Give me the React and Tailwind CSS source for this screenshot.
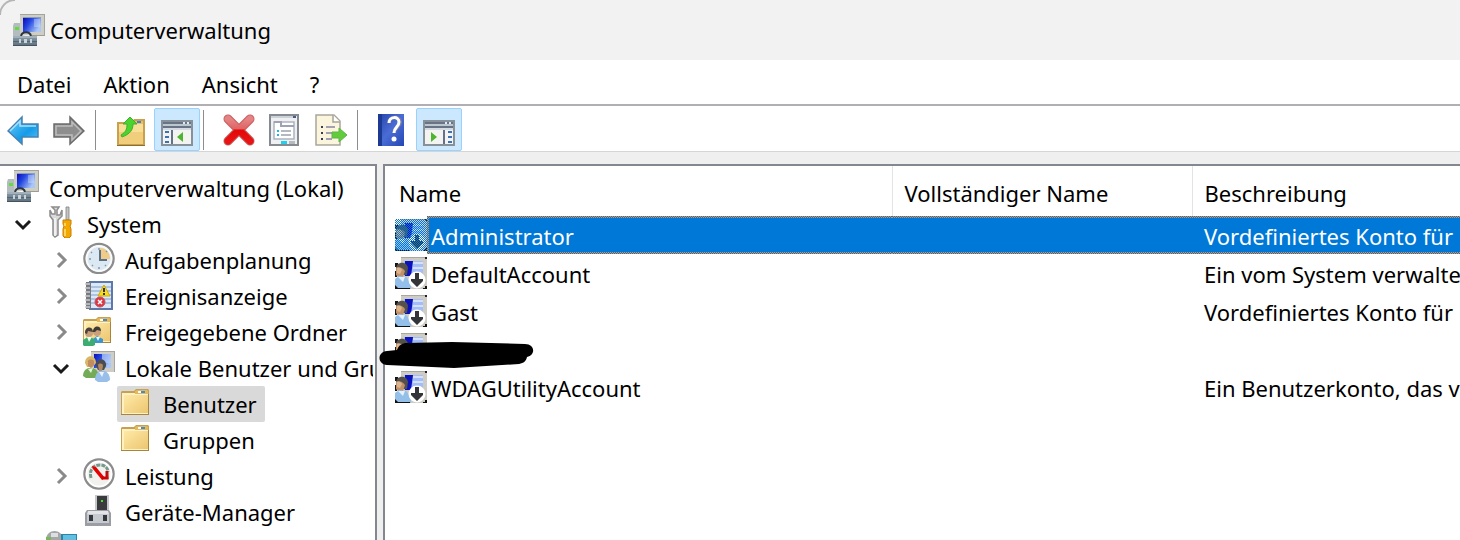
import { useState } from 'react';

const Icon = ({ children }) => (
  <svg className="block size-8 shrink-0" viewBox="0 0 32 32" aria-hidden="true">
    {children}
  </svg>
);

const ComputerIcon = () => (
  <Icon>
    <defs>
      <linearGradient id="screen" x1="0" y1="0" x2="1" y2="0.5">
        <stop offset="0" stopColor="#0c0cb4" />
        <stop offset="0.4" stopColor="#2344e0" />
        <stop offset="1" stopColor="#a9c8f8" />
      </linearGradient>
      <linearGradient id="toolbox" x1="0" y1="0" x2="0" y2="1">
        <stop offset="0" stopColor="#8c9daa" />
        <stop offset="1" stopColor="#5d6f7c" />
      </linearGradient>
    </defs>
    <path d="M1 9h7v13H0V12z" fill="#b3bcbf" />
    <path d="M2 13h4v3H2z" fill="#62dc3c" />
    <path d="M7 0h25v22H18l-3-1-8 1z" fill="#cfcec4" />
    <path d="M7 0h25v1H7zM31 0h1v22h-1z" fill="#a3a59c" />
    <path d="M19 21h12v1H19z" fill="#9b9d94" />
    <path d="M10 4h18v14H10z" fill="url(#screen)" />
    <path d="M10 3h18v1H10z" fill="#8b9bbb" />
    <path d="M21 5h6v8h-6z" fill="#d5e4fc" fillOpacity="0.4" />
    <path d="M8 22c1-5 9-5 10 0" fill="none" stroke="#2c3640" strokeWidth="2" />
    <path d="M0 22h24v10H0z" fill="url(#toolbox)" />
    <path d="M0 22h24v2H0z" fill="#a1b0ba" />
    <path d="M0 27h24v1H0z" fill="#526572" />
    <path d="M6 25h2v4H6zM11 25h3v4h-3zM17 25h2v4h-2z" fill="#c9d3da" />
    <path d="M0 31h24v1H0z" fill="#45535e" />
  </Icon>
);

const ToolsIcon = () => (
  <Icon>
    <path d="M7 1l3 3v4H7L5 4v6l3 4v15l2 2 3-2V14l4-4V4l-2 5-3 0V4l2-3z" fill="#dadada" stroke="#8c8c8c" strokeWidth="1.5" />
    <path d="M10 12v18" stroke="#f9f9f9" strokeWidth="1.5" />
    <path d="M21 1h3v13h-3z" fill="#c4c4c4" stroke="#808080" strokeWidth="0.8" />
    <path d="M18 14h8v4l-1 2 1 3v7l-2 2h-4l-2-2v-7l1-3-1-2z" fill="#f2a800" stroke="#ca7c00" />
    <path d="M20 17v3M20 23v7" stroke="#ffe17c" strokeWidth="1.5" />
  </Icon>
);

const ClockIcon = () => (
  <Icon>
    <circle cx="16" cy="16.500" r="14.500" fill="#dce9f2" stroke="#8c8c8c" strokeWidth="2.500" />
    <circle cx="16" cy="16.500" r="12.500" fill="none" stroke="#fafafa" strokeWidth="2" />
    <path d="M17 6c6 0 10 5 10 11H17z" fill="#f0cc88" />
    <path d="M17 8v10h7" fill="none" stroke="#5c7186" strokeWidth="2" />
    <path d="M16 6v2M6 17h2M16 25v2M8 10l1 1M9 24l1-1M23 24l-1-1M24 9l-1 1" stroke="#8197aa" strokeWidth="1.500" />
  </Icon>
);

const EventIcon = () => (
  <Icon>
    <path d="M6 3h24v29H6z" fill="#5f78ac" />
    <path d="M8 5h20v25H8z" fill="#dbe9f6" />
    <path d="M8 9h20M8 13h20M8 17h20M8 21h20M8 25h20" stroke="#7f9fcd" />
    <path d="M3 4h5v27H3z" fill="#77797e" />
    <path d="M2 6h5M2 10h5M2 14h5M2 18h5M2 22h5M2 26h5M2 29h5" stroke="#c9cbd0" strokeWidth="1.500" />
    <path d="M21 7l6 11H15z" fill="#f8dc20" stroke="#ceaa08" />
    <path d="M21 10v4M21 15v2" stroke="#333" strokeWidth="2" />
    <circle cx="17" cy="24" r="5" fill="#d93945" stroke="#c4505c" />
    <path d="M15 22l4 4M19 22l-4 4" stroke="#fff" strokeWidth="1.500" />
  </Icon>
);

const FolderBase = () => (
  <>
    <defs>
      <linearGradient id="folder" x1="0" y1="0" x2="1" y2="1">
        <stop offset="0" stopColor="#ffe9a6" />
        <stop offset="1" stopColor="#ecc671" />
      </linearGradient>
    </defs>
    <path d="M0 6l1-1h12l2-2h12l1 1v25H0z" fill="#c9a050" />
    <path d="M1 7h26v21H1z" fill="#fff1c0" />
    <path d="M3 9h24v18H3z" fill="url(#folder)" />
    <path d="M14 8V5l2-1h10l1 1v3z" fill="#e3b95f" />
    <path d="M17 5h4v2h-4z" fill="#fff" />
    <path d="M20 5h4v2h-4z" fill="#3d8be0" />
    <path d="M0 28h28v1H0zM27 8h1v21h-1z" fill="#a8853c" />
  </>
);

const FolderIcon = () => (
  <Icon>
    <FolderBase />
  </Icon>
);

const SharedFolderIcon = () => (
  <Icon>
    <FolderBase />
    <circle cx="14" cy="18" r="4" fill="#caa07a" />
    <path d="M10 18c0-7 8-7 8-1l-4-1-2 2z" fill="#3d3a38" />
    <circle cx="6" cy="19" r="4" fill="#caa07a" />
    <path d="M2 19c0-7 8-7 8-1l-5-1-1 3z" fill="#4a423c" />
    <path d="M10 29v-4l4-3 6 3v4z" fill="#3a96cd" />
    <path d="M13 23l2 4 2-4z" fill="#e8f8ff" />
    <path d="M0 31v-5l5-3h3l4 3v5l-2 1H1z" fill="#3cac73" />
    <path d="M4 23l2 5 3-5z" fill="#e8fff0" />
  </Icon>
);

const GroupIcon = () => (
  <Icon>
    <path d="M8 1h24v21H8z" fill="#cfcec6" />
    <path d="M8 1h24v1H8zM31 1h1v21h-1z" fill="#a5a69f" />
    <path d="M11 4h17v14H11z" fill="url(#screen)" />
    <path d="M19 4h9v9h-9z" fill="#b7cffa" fillOpacity="0.7" />
    <path d="M2 13c0-9 11-9 11 0l-3 4H4z" fill="#d9b765" />
    <path d="M5 11c1-2 6-2 6 1v3l-3 3-3-2z" fill="#c18c62" />
    <path d="M0 26c0-11 15-11 16 0l-3 2H3z" fill="#74ab56" />
    <path d="M5 19l3 4 2-5z" fill="#e5f3dc" />
    <path d="M13 16c-1-9 11-9 10 0l-2 4h-6z" fill="#4a4c50" />
    <path d="M15 15c1-2 5-2 5 1l-1 5h-3z" fill="#b28763" />
    <path d="M12 30c0-13 15-12 15 0l-3 2h-9z" fill="#98bfe9" />
    <path d="M16 22l3 5 2-5z" fill="#e8f3ff" />
  </Icon>
);

const GaugeIcon = () => (
  <Icon>
    <circle cx="16" cy="16" r="14.500" fill="#f2f1ee" stroke="#8c8c8c" strokeWidth="2.500" />
    <circle cx="16" cy="16" r="12.500" fill="none" stroke="#fff" strokeWidth="2" />
    <path d="M8 20c-2-8 2-13 9-13 5 0 8 3 8 7" fill="none" stroke="#77998c" strokeWidth="3" strokeDasharray="4 1" />
    <path d="M9 8l4 1 9 11-3 2-9-11z" fill="#e60000" />
    <path d="M19 20h5v-7" fill="none" stroke="#d00000" strokeWidth="3" />
    <path d="M24 13l1 8" stroke="#a42020" />
  </Icon>
);

const DeviceIcon = () => (
  <Icon>
    <path d="M12 1h14v17H12z" fill="#c5c7ca" />
    <path d="M14 2h10v15H14z" fill="#393b3d" />
    <path d="M18 6h2v2h-2z" fill="#47e02c" />
    <path d="M4 16h22l2 3v13H2V19z" fill="#9a9da3" />
    <path d="M5 17h20l1 3H4z" fill="#e2e4e7" />
    <path d="M4 20h22v9H4z" fill="#c6c9ce" />
    <path d="M6 21h4v6H6zM20 21h4v6h-4z" fill="#34383d" />
  </Icon>
);

const StorageIcon = () => (
  <Icon>
    <path d="M1 10c0-12 17-12 17 0v6H1z" fill="#a4a6a8" />
    <path d="M6 3h7v4H6z" fill="#dcdedf" />
    <path d="M1 7h5v4H1z" fill="#74b95c" />
    <path d="M16 4h16v12H16z" fill="#2c84aa" />
    <path d="M18 5h13v10H18z" fill="#63bfe0" />
  </Icon>
);

const UserIcon = ({ dithered }) => (
  <span className="relative block size-8 shrink-0">
    <Icon>
      <path d="M6 0h25l1 1v30l-1 1H6z" fill="#cfccc4" />
      <path d="M6 0h26v1H6z" fill="#a8a8a2" />
      <path d="M30 0h2v2h-2z" fill="#222" />
      <path d="M9 4h19v15H9z" fill="#a3bdf8" />
      <path d="M18 5h10v2H18zM18 10h10v2H18z" fill="#d3e0ff" />
      <path d="M10 4h8l-2 15h-6z" fill="#0a12bd" />
      <path d="M0 6h3v4H0zM0 14h2v6H0z" fill="#151515" />
      <path d="M1 12c0-8 11-8 12-1l-1 7H2z" fill="#54504c" />
      <path d="M1 11c3-2 7 0 9 3l-2 6-4 1-3-3z" fill="#c0926c" />
      <path d="M2 11c2-1 4 0 5 2l-2 4-3-1z" fill="#dcb48e" />
      <path d="M0 22l4-3 7 1 5 6v6H2l-2-3z" fill="#93bfe8" />
      <path d="M3 20l5 5 2-5z" fill="#e5f1ff" />
      <path d="M0 28l3 3h12v1H0zM28 31h2v-2h2v3h-4z" fill="#111" />
      <circle cx="22" cy="23" r="8.500" fill="#fff" />
      <path d="M20 16h4v6h4v2l-6 6-6-6v-2h4z" fill="#333538" />
    </Icon>
    {dithered && (
      <span className="absolute inset-0 [background:repeating-conic-gradient(#0078d7_0_25%,transparent_0_50%)_0_0/2px_2px]" />
    )}
  </span>
);

const BackIcon = () => (
  <Icon>
    <defs>
      <linearGradient id="back" x1="0" y1="0" x2="1" y2="1">
        <stop offset="0" stopColor="#6fd0fb" />
        <stop offset="0.6" stopColor="#159be8" />
        <stop offset="1" stopColor="#5bc5f6" />
      </linearGradient>
    </defs>
    <path d="M1 17L15 3v7h16v13H15v7z" fill="url(#back)" stroke="#4681b2" strokeWidth="1.500" />
    <path d="M3 17l10-10v5h16" fill="none" stroke="#a5e2fd" strokeWidth="1.500" />
  </Icon>
);

const ForwardIcon = () => (
  <Icon>
    <path d="M31 17L17 3v7H1v13h16v7z" fill="#8e8e8e" stroke="#6c6c6c" strokeWidth="1.500" />
    <path d="M28 17l-9-9v4H3v9h16v5z" fill="none" stroke="#bdbdbd" strokeWidth="1.500" />
  </Icon>
);

const UpIcon = () => (
  <Icon>
    <path d="M2 8h15l2-3h11v27H2z" fill="#c9a04e" />
    <path d="M4 10h24v20H4z" fill="#f8df95" />
    <path d="M4 18h24v12H4z" fill="#f0ce7c" />
    <path d="M18 7h10v3H18z" fill="#e6bf68" />
    <path d="M22 7h4v2h-4z" fill="#3482da" />
    <path d="M15 3l7 7h-4c0 6-3 10-11 13l-1-2c5-3 6-6 6-11H8z" fill="#4bd32e" stroke="#3faf30" />
    <path d="M2 31h28v1H2z" fill="#8e6e2b" />
  </Icon>
);

// actionPane puts the list of lines on the right instead of the left
const PaneIcon = ({ actionPane }) => (
  <Icon>
    <path d="M0 5h32v26H0z" fill="#87919a" />
    <path d="M2 7h28v22H2z" fill="#f3f3f1" />
    <path d="M2 7h28v2H2z" fill="#667486" />
    <path d="M22 7h2v2h-2zM26 7h2v2h-2z" fill="#dfe8f2" />
    <path d="M2 9h28v2H2z" fill="#bdc5cf" />
    <path d="M2 11h28v2H2z" fill="#667486" />
    <path d="M2 13h28v2H2z" fill="#d3dae2" />
    {actionPane ? (
      <>
        <path d="M20 15h2v14h-2z" fill="#64718a" />
        <path d="M25 17h4M25 22h4M25 27h4" stroke="#3972b8" strokeWidth="2" />
        <path d="M8 17v10l6-5z" fill="#4fb52e" />
      </>
    ) : (
      <>
        <path d="M10 15h2v14h-2z" fill="#64718a" />
        <path d="M4 17h4M4 22h4M4 27h4" stroke="#3972b8" strokeWidth="2" />
        <path d="M22 17v10l-6-5z" fill="#4fb52e" />
      </>
    )}
  </Icon>
);

const DeleteIcon = () => (
  <Icon>
    <defs>
      <linearGradient id="cross" x1="0" y1="0" x2="0" y2="1">
        <stop offset="0" stopColor="#e58484" />
        <stop offset="0.45" stopColor="#e06464" />
        <stop offset="0.5" stopColor="#e50808" />
        <stop offset="1" stopColor="#e81414" />
      </linearGradient>
    </defs>
    <path d="M5 5l22 22M27 5L5 27" stroke="#c65c5c" strokeWidth="9" strokeLinecap="round" />
    <path d="M5 5l22 22M27 5L5 27" stroke="url(#cross)" strokeWidth="7" strokeLinecap="round" />
  </Icon>
);

const PropertiesIcon = () => (
  <Icon>
    <path d="M0 0h30v32H0z" fill="#858b91" />
    <path d="M2 2h26v28H2z" fill="#eef0f2" />
    <path d="M2 2h24v2H2z" fill="#cdd2d9" />
    <path d="M24 2h3v2h-3z" fill="#475d82" />
    <path d="M5 8h20v17H5z" fill="#fff" stroke="#aeb2c0" strokeWidth="1.500" />
    <path d="M5 8h7v4h13" fill="none" stroke="#9da2b5" strokeWidth="2" />
    <path d="M12 17h10M12 21h10" stroke="#9ba4ab" strokeWidth="1.500" />
    <path d="M8 17h2M8 21h2" stroke="#20b5df" strokeWidth="2" />
    <path d="M12 27h6v3h-6z" fill="#20d0f0" />
    <path d="M20 27h6v3h-6z" fill="#b7bbc0" />
  </Icon>
);

const ExportIcon = () => (
  <Icon>
    <path d="M1 1h18l6 6v24H1z" fill="#fbf5de" stroke="#a9a79b" strokeWidth="1.500" />
    <path d="M18 1v7h7" fill="#fff" stroke="#a5a49b" strokeWidth="1.500" />
    <path d="M6 13h2M6 19h2M6 25h2" stroke="#3d3a55" strokeWidth="2" />
    <path d="M11 13h9M11 19h6M11 25h6" stroke="#8983a7" strokeWidth="1.500" />
    <path d="M17 18h7v-4l8 7-8 7v-4h-7z" fill="#60cc3b" stroke="#5cb548" />
  </Icon>
);

const HelpIcon = () => (
  <Icon>
    <defs>
      <linearGradient id="help" x1="0" y1="0" x2="1" y2="1">
        <stop offset="0" stopColor="#2444a8" />
        <stop offset="0.5" stopColor="#4a6cd5" />
        <stop offset="1" stopColor="#2346b3" />
      </linearGradient>
    </defs>
    <path d="M1 0h26v32H1z" fill="url(#help)" />
    <path d="M1 0h4v32H1z" fill="#1c3994" />
    <path d="M12 9c0-7 11-7 11-1 0 5-6 5-6 11" fill="none" stroke="#777fa5" strokeWidth="4" />
    <path d="M12 9c0-7 10-7 10-1 0 5-5 5-5 11" fill="none" stroke="#fff" strokeWidth="3" />
    <circle cx="17" cy="25" r="2.500" fill="#fff" />
  </Icon>
);

const tree = [
  {
    name: 'System',
    icon: <ToolsIcon />,
    open: true,
    children: [
      { name: 'Aufgabenplanung', icon: <ClockIcon />, children: [] },
      { name: 'Ereignisanzeige', icon: <EventIcon />, children: [] },
      { name: 'Freigegebene Ordner', icon: <SharedFolderIcon />, children: [] },
      {
        name: 'Lokale Benutzer und Gruppen',
        icon: <GroupIcon />,
        open: true,
        children: [
          { name: 'Benutzer', icon: <FolderIcon /> },
          { name: 'Gruppen', icon: <FolderIcon /> },
        ],
      },
      { name: 'Leistung', icon: <GaugeIcon />, children: [] },
      { name: 'Geräte-Manager', icon: <DeviceIcon /> },
    ],
  },
  { name: 'Datenspeicher', icon: <StorageIcon /> },
];

const users = [
  { name: 'Administrator', description: 'Vordefiniertes Konto für' },
  { name: 'DefaultAccount', description: 'Ein vom System verwalte' },
  { name: 'Gast', description: 'Vordefiniertes Konto für' },
  { name: '', description: '' },
  { name: 'WDAGUtilityAccount', description: 'Ein Benutzerkonto, das v' },
];

const Chevron = ({ open }) => (
  <svg className="size-5" viewBox="0 0 20 20" fill="none" strokeWidth="3" aria-hidden="true">
    {open ? (
      <path d="M3 7l7 7 7-7" stroke="#1a1a1a" />
    ) : (
      <path d="M7 3l7 7-7 7" stroke="#8a8a8a" />
    )}
  </svg>
);

const TreeItem = ({ node, selected, onSelect }) => {
  const [open, setOpen] = useState(!!node.open);

  return (
    <li>
      <div className="flex h-9">
        {node.children ? (
          <button
            className="flex w-9 shrink-0 items-center justify-center"
            aria-label={node.name}
            aria-expanded={open}
            onClick={() => setOpen(!open)}
          >
            <Chevron open={open} />
          </button>
        ) : (
          <span className="w-9 shrink-0" />
        )}
        <button
          onClick={() => onSelect(node.name)}
          className={`flex gap-2.5 rounded-xs pl-1 pr-2 whitespace-nowrap ${selected === node.name ? 'bg-[#d9d9d9]' : ''}`}
        >
          {node.icon}
          <span className="leading-9">{node.name}</span>
        </button>
      </div>
      {open && node.children?.length > 0 && (
        <ul className="pl-[38px]">
          {node.children.map((child) => (
            <TreeItem key={child.name} node={child} selected={selected} onSelect={onSelect} />
          ))}
        </ul>
      )}
    </li>
  );
};

const ToolButton = ({ label, active, children }) => (
  <button
    aria-label={label}
    className={`flex h-[43px] w-[46px] items-center justify-center rounded-xs border ${
      active ? 'border-[#99d1ff] bg-[#cce8ff] pt-0.5' : 'border-transparent'
    }`}
  >
    {children}
  </button>
);

const Separator = () => <div className="mr-3 ml-[3px] h-10 w-px bg-[#8d8d8d]" />;

// Cell content with the dotted focus frame along its edges when the row is selected
const Cell = ({ selected, first, children }) => (
  <div
    className={`h-[38px] min-w-0 flex-1 py-0.5 ${first ? 'pl-0.5' : ''} ${
      selected ? '[background:repeating-conic-gradient(#f08a3c_0_25%,#0078d7_0_50%)_0_0/2px_2px]' : ''
    }`}
  >
    <div
      className={`h-full overflow-hidden leading-9 whitespace-nowrap ${first ? 'pl-0.5' : 'pl-3'} ${
        selected ? 'bg-[#0078d7] text-white' : ''
      }`}
    >
      {children}
    </div>
  </div>
);

const App = () => {
  const [folder, setFolder] = useState('Benutzer');
  const [selectedRow, setSelectedRow] = useState(0);

  return (
    <div className="flex h-screen flex-col overflow-hidden bg-white font-['Noto_Sans','Segoe_UI',sans-serif] text-[22px] text-black">
      <header className="relative flex h-[60px] shrink-0 items-center gap-[5px] bg-[#f2f2f2] pl-[13px]">
        <span className="absolute -top-px -left-px size-4 rounded-tl-2xl border-t-2 border-l-2 border-[#b5b5b5]" />
        <ComputerIcon />
        <h1>Computerverwaltung</h1>
      </header>

      <nav className="flex h-[46px] shrink-0 items-center border-b-2 border-[#b0b0b4] pl-px pt-1">
        <button className="px-4">Datei</button>
        <button className="px-4">Aktion</button>
        <button className="px-4">Ansicht</button>
        <button className="px-4">?</button>
      </nav>

      <div className="flex h-[46px] shrink-0 items-center border-b border-[#d5d5d5] pt-0.5">
        <ToolButton label="Zurück"><BackIcon /></ToolButton>
        <ToolButton label="Vorwärts"><ForwardIcon /></ToolButton>
        <Separator />
        <ToolButton label="Übergeordneter Ordner"><UpIcon /></ToolButton>
        <ToolButton label="Konsolenstruktur" active><PaneIcon /></ToolButton>
        <Separator />
        <ToolButton label="Löschen"><DeleteIcon /></ToolButton>
        <ToolButton label="Eigenschaften"><PropertiesIcon /></ToolButton>
        <ToolButton label="Liste exportieren"><ExportIcon /></ToolButton>
        <Separator />
        <ToolButton label="Hilfe"><HelpIcon /></ToolButton>
        <ToolButton label="Aktionsbereich" active><PaneIcon actionPane /></ToolButton>
      </div>

      <div className="flex min-h-0 flex-1 gap-1.5 bg-[#efefef] pt-3">
        <aside className="w-[377px] shrink-0 overflow-hidden border-t-2 border-r-2 border-[#828790] bg-white pt-1 pr-0.5">
          <div className="overflow-hidden">
            <button className="ml-[3px] flex h-9 gap-2.5 px-1 whitespace-nowrap">
              <ComputerIcon />
              <span className="leading-9">Computerverwaltung (Lokal)</span>
            </button>
            <ul className="pl-[5px]">
              {tree.map((node) => (
                <TreeItem key={node.name} node={node} selected={folder} onSelect={setFolder} />
              ))}
            </ul>
          </div>
        </aside>

        <main className="relative min-w-0 flex-1 border-t-2 border-l-2 border-[#828790] bg-white">
          <table className="w-full table-fixed border-collapse text-left">
            <colgroup>
              <col className="w-[507px]" />
              <col className="w-[300px]" />
              <col />
            </colgroup>
            <thead>
              <tr className="h-[50px]">
                <th className="border-r border-[#e3e3e3] pt-1 pl-3.5 font-normal">Name</th>
                <th className="border-r border-[#e3e3e3] pt-1 pl-3 font-normal">Vollständiger Name</th>
                <th className="pt-1 pl-3 font-normal">Beschreibung</th>
              </tr>
            </thead>
            <tbody>
              {users.map((user, index) => (
                <tr key={index} onClick={() => setSelectedRow(index)} aria-selected={selectedRow === index}>
                  <td className="p-0">
                    <div className="flex items-center pl-2.5">
                      <UserIcon dithered={selectedRow === index} />
                      <Cell selected={selectedRow === index} first>{user.name}</Cell>
                    </div>
                  </td>
                  <td className="p-0">
                    <Cell selected={selectedRow === index} />
                  </td>
                  <td className="p-0">
                    <Cell selected={selectedRow === index}>{user.description}</Cell>
                  </td>
                </tr>
              ))}
            </tbody>
          </table>

          {/* marker stroke over the hidden account */}
          <svg className="absolute top-[175px] -left-2 h-[30px] w-[160px]" viewBox="0 0 160 30" aria-hidden="true">
            <path
              d="M10 10 20 9C22 4 25 2 30 2L75 1 148 3C158 3 159 14 150 16C149 20 147 22 142 23L77 27 10 24C0 23 0 11 10 10Z"
              fill="#000"
            />
          </svg>
        </main>
      </div>
    </div>
  );
};

export default App;
